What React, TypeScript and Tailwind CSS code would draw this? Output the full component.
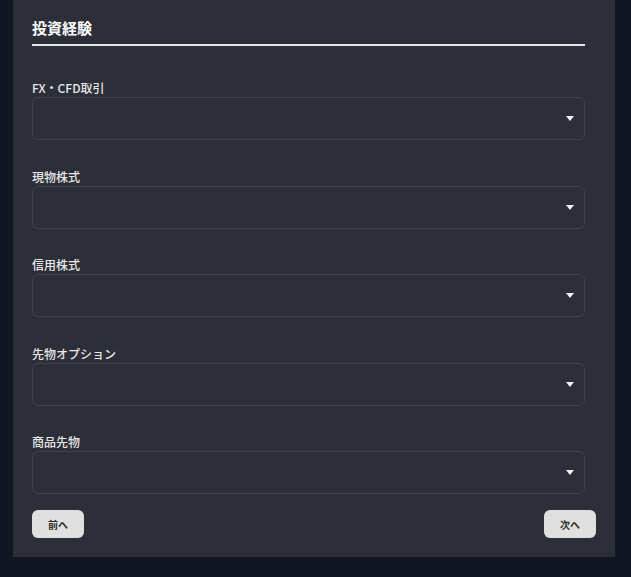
const FIELDS = ["FX・CFD取引", "現物株式", "信用株式", "先物オプション", "商品先物"];

function SelectField({ label }: { label: string }) {
  return (
    <div className="flex flex-col">
      <label className="h-[12px] mb-[3px] text-[12px] leading-[12px] font-medium text-[#e8e8ea]">
        {label}
      </label>
      <div className="relative h-[43px] rounded-[6px] border border-[#40444d] bg-[#2c2f38]">
        <svg
          className="absolute right-[10px] top-[18px]"
          width="8"
          height="5"
          viewBox="0 0 8 5">
          <path d="M0 0h8L4 5z" fill="#f2f2f2" />
        </svg>
      </div>
    </div>
  );
}

export default function App() {
  return (
    <div
      className="min-h-[577px] bg-[#111722] px-[13px] pb-[20px]"
      style={{ fontFamily: '"Noto Sans CJK JP", "Noto Sans", sans-serif' }}>
      <div className="w-[602px] bg-[#2c2f38] pt-[18px] pb-[19px]">
        <div className="pl-[19px] pr-[30px]">
          <h2 className="border-b-2 border-[#e8e8e8] pb-[6px] text-[15px] leading-[20px] font-bold text-white">
            投資経験
          </h2>
          <div className="mt-[36px] flex flex-col gap-[30.5px]">
            {FIELDS.map((f) => (
              <SelectField key={f} label={f} />
            ))}
          </div>
        </div>
        <div className="mt-[16px] flex justify-between pl-[19px] pr-[19px]">
          <button className="h-[28px] w-[52px] rounded-[6px] bg-[#e0e0e0] text-[10px] font-bold text-[#2a2a2a]">
            前へ
          </button>
          <button className="h-[28px] w-[52px] rounded-[6px] bg-[#e0e0e0] text-[10px] font-bold text-[#2a2a2a]">
            次へ
          </button>
        </div>
      </div>
    </div>
  );
}
